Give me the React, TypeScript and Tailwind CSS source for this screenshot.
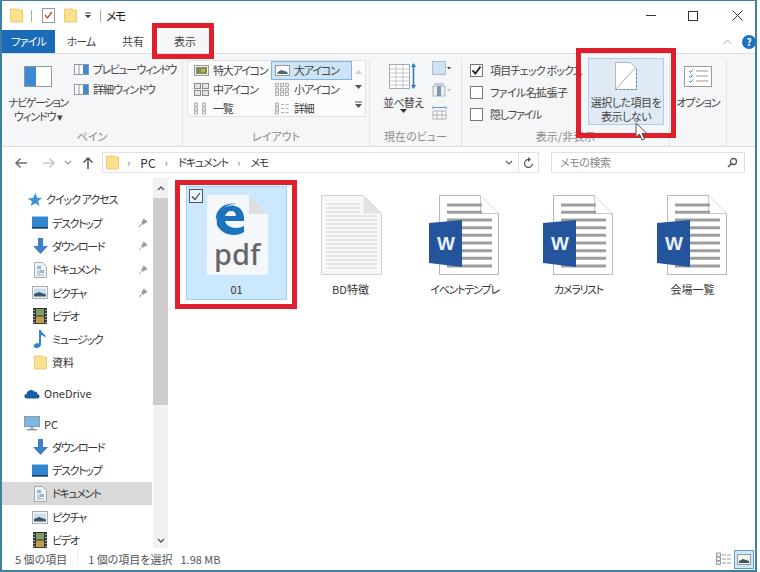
import { ReactNode } from 'react';

const Folder = ({ className = '' }: { className?: string }) => (
  <svg width="13" height="15" viewBox="0 0 13 15" className={className}>
    <path d="M.5 1h8l1 1h3v12H.5z" fill="#fbe08e" stroke="#e5c365" strokeWidth="0.8" />
  </svg>
);

const Pin = () => (
  <svg width="10" height="10" viewBox="0 0 10 10" className="ml-auto mr-[4px]">
    <path d="M3 4.400l1.900-1.900-.1-.9L6 .5l3.500 3.500-1.100.9-.9-.1L5.600 6.700z" fill="#9a9a9a" />
    <path d="M1 9l3-3.200" stroke="#9a9a9a" />
  </svg>
);

const Desktop = () => (
  <svg width="16" height="13" viewBox="0 0 16 13">
    <rect x="0" y="0.500" width="16" height="12" fill="#2f86cf" />
    <rect x="0" y="11" width="16" height="1.500" fill="#1c3f63" />
  </svg>
);

const Down = () => (
  <svg width="15" height="16" viewBox="0 0 15 16">
    <path d="M5 0h5v8h5l-7.500 8L0 8h5z" fill="#3d7fc4" />
  </svg>
);

const Doc = () => (
  <svg width="13" height="16" viewBox="0 0 13 16">
    <path d="M.5.500h8l4 4v11H.5z" fill="#f3f6f8" stroke="#a3a9ae" />
    <rect x="3" y="4" width="4" height="3" fill="#8fb4d6" />
    <rect x="6" y="8" width="4" height="3" fill="#8fb4d6" />
    <path d="M3 9h3M3 11h3M3 13h7" stroke="#8a96a0" strokeWidth="0.800" />
  </svg>
);

const Pic = () => (
  <svg width="16" height="13" viewBox="0 0 16 13">
    <rect x="0.500" y="0.500" width="15" height="12" fill="#f4f6f7" stroke="#a8adb1" />
    <rect x="2" y="2.500" width="12" height="8" fill="#c9ddec" />
    <path d="M2 8l5-2 7 2.500v2H2z" fill="#38586e" />
  </svg>
);

const Video = () => (
  <svg width="14" height="16" viewBox="0 0 14 16">
    <rect width="14" height="16" fill="#31373b" />
    <rect x="3" y="1" width="8" height="6.500" fill="#7f9c5a" />
    <rect x="3" y="8.500" width="8" height="6.500" fill="#c79a4a" />
    <path d="M1 2v1M1 5v1M1 8v1M1 11v1M1 14v1M13 2v1M13 5v1M13 8v1M13 11v1M13 14v1" stroke="#fff" strokeWidth="1.200" />
  </svg>
);

const Music = () => (
  <svg width="14" height="18" viewBox="0 0 14 18">
    <path d="M6 0h2c0 3 5 4 5 8-1-1.500-3-2.500-5-3v9.500c0 2-2 3.500-4.500 3.500S0 16.500 1 15c.8-1.300 3-2 5-1.500z" fill="#2f86cf" />
  </svg>
);

const SideRow = ({ icon, label, pin, active, wide }: { icon: ReactNode; label: string; pin?: boolean; active?: boolean; wide?: boolean }) => (
  <div className={`flex h-[23.3px] shrink-0 items-center pl-[30px] ${active ? 'bg-[#d9d9d9]' : ''}`}>
    <span className="flex w-[16px] shrink-0 justify-center">{icon}</span>
    <span className={`ml-[4px] text-[#333] ${wide ? '' : 'tracking-[-1.3px]'}`}>{label}</span>
    {pin && <Pin />}
  </div>
);

const SideHead = ({ icon, label, className = '', textClass = '' }: { icon: ReactNode; label: string; className?: string; textClass?: string }) => (
  <div className={`flex h-[23.3px] shrink-0 items-center ${className}`}>
    <span className="flex w-[16px] shrink-0 justify-center">{icon}</span>
    <span className={`ml-[4px] text-[#333] ${textClass}`}>{label}</span>
  </div>
);

const GalleryIcon = ({ kind }: { kind: number }) => (
  <svg width="15" height="13" viewBox="0 0 15 13" className="shrink-0">
    {kind === 0 && (
      <>
        <rect x="0.500" y="1.500" width="14" height="10" fill="#f3f3f3" stroke="#999" />
        <rect x="2" y="3" width="11" height="7" fill="#7e8d62" />
        <rect x="7" y="5" width="4" height="3" fill="#d6a93e" />
      </>
    )}
    {kind === 1 && (
      <>
        <rect x="0.500" y="1.500" width="14" height="10" fill="#fff" stroke="#999" />
        <path d="M2.500 8l4-2 6 2v2h-10z" fill="#51677a" />
      </>
    )}
    {kind === 2 && (
      <>
        <rect x="0.500" y="0.500" width="6" height="5" fill="#dfe7ee" stroke="#888" />
        <rect x="8.500" y="0.500" width="6" height="5" fill="#dfe7ee" stroke="#888" />
        <rect x="0.500" y="7.500" width="6" height="5" fill="#dfe7ee" stroke="#888" />
        <rect x="8.500" y="7.500" width="6" height="5" fill="#dfe7ee" stroke="#888" />
      </>
    )}
    {kind === 3 && (
      <path d="M.5.500h3v3h-3zM5.500.500h3v3h-3zM10.500.500h3v3h-3zM.5 5h3v3h-3zM5.500 5h3v3h-3zM10.500 5h3v3h-3zM.5 9.500h3v3h-3zM5.500 9.500h3v3h-3zM10.500 9.500h3v3h-3z" fill="#f2f2f2" stroke="#999" strokeWidth="0.800" />
    )}
    {kind === 4 && (
      <path d="M.5 1h3v3h-3zM.5 5h3v3h-3zM.5 9h3v3h-3zM8.500 1h3v3h-3zM8.500 5h3v3h-3zM8.500 9h3v3h-3z" fill="#f4f4f4" stroke="#999" strokeWidth="0.800" />
    )}
    {kind === 5 && (
      <path d="M.5 1h3v3h-3zM.5 5h3v3h-3zM.5 9h3v3h-3zM6 2.500h3M10.500 2.500h3M6 6.500h3M10.500 6.500h3M6 10.500h3M10.500 10.500h3" fill="#f4f4f4" stroke="#999" strokeWidth="0.800" />
    )}
  </svg>
);

const GalleryItem = ({ kind, label, active }: { kind: number; label: string; active?: boolean }) => (
  <div className={`flex h-[19px] w-[81px] items-center gap-[4px] pl-[3px] border ${active ? 'border-[#7eb4ea] bg-[#cde3f6]' : 'border-transparent'}`}>
    <GalleryIcon kind={kind} />
    <span className="whitespace-nowrap tracking-[-1.2px] text-[#444]">{label}</span>
  </div>
);

const Check = ({ label, checked, textClass }: { label: string; checked?: boolean; textClass: string }) => (
  <div className="flex h-[22px] items-center gap-[7px]">
    <span className="flex h-[13px] w-[13px] items-center justify-center border border-[#777] bg-white">
      {checked && (
        <svg width="11" height="11" viewBox="0 0 11 11">
          <path d="M1.500 5.500l3 3 5-7" fill="none" stroke="#222" strokeWidth="1.800" />
        </svg>
      )}
    </span>
    <span className={`whitespace-nowrap text-[#444] ${textClass}`}>{label}</span>
  </div>
);

const Group = ({ width, label, children }: { width: string; label: string; children: ReactNode }) => (
  <div className={`flex shrink-0 flex-col border-r border-[#e2e3e4] ${width}`}>
    <div className="flex h-[69px]">{children}</div>
    <div className="text-center leading-[14px] text-[#8b8b8b]">{label}</div>
  </div>
);

const WordFile = ({ label, textClass = '' }: { label: string; textClass?: string }) => (
  <div className="flex h-[114px] w-[101px] shrink-0 flex-col items-center border border-transparent pt-[7px]">
    <svg width="72" height="82" viewBox="0 0 72 82">
      <path d="M10.500 1.500h41l18 18v61h-59z" fill="#fff" stroke="#b8b8b8" />
      <path d="M51.500 1.500v18h18" fill="#fff" stroke="#c8c8c8" />
      <path d="M18 11h35M18 18.300h35M18 26h45M18 33.700h45M18 41.300h45M18 49h45M18 56.700h45M18 64.300h45M18 72h45" stroke="#9e9e9e" strokeWidth="3" />
      <path d="M0 29l33-3v47L0 69z" fill="#24559c" />
      <text x="17" y="56" textAnchor="middle" fontSize="19" fontWeight="700" fontFamily="'Liberation Sans', sans-serif" fill="#eaf1fa">W</text>
    </svg>
    <span className={`mt-[5px] leading-[16px] text-[#333] ${textClass}`}>{label}</span>
  </div>
);

export default function App() {
  return (
    <div className="relative h-[572px] w-[760px] overflow-hidden bg-white text-[11px] font-['Noto_Sans_CJK_JP','Noto_Sans',sans-serif] [font-feature-settings:'palt']">
      <div className="flex h-[572px] w-[757px] flex-col border-x-2 border-t border-b-2 border-[#3f80a0] bg-white">
        {/* title bar */}
        <div className="flex h-[29px] shrink-0 items-center pl-[8px]">
          <Folder />
          <span className="ml-[8px] h-[12px] w-px bg-[#aaa]" />
          <svg width="13" height="15" viewBox="0 0 13 15" className="ml-[10px]">
            <rect x="0.500" y="0.500" width="12" height="14" fill="#fff" stroke="#999" />
            <path d="M3 7l2.500 3L10 4" fill="none" stroke="#c8452c" strokeWidth="1.300" />
          </svg>
          <Folder className="ml-[9px]" />
          <svg width="8" height="8" viewBox="0 0 8 8" className="ml-[7px]">
            <path d="M1 1h6" stroke="#444" />
            <path d="M1 3l3 3 3-3z" fill="#333" />
          </svg>
          <span className="ml-[8px] h-[12px] w-px bg-[#aaa]" />
          <span className="ml-[5px] text-[12px] tracking-[-1.5px] text-[#222]">メモ</span>
          <div className="ml-auto flex items-center">
            <span className="h-[1px] w-[10px] bg-[#333]" />
            <span className="ml-[32px] h-[10px] w-[10px] border border-[#333]" />
            <svg width="11" height="11" viewBox="0 0 11 11" className="ml-[34px] mr-[12px]">
              <path d="M.5.500l10 10M10.500.500l-10 10" stroke="#333" />
            </svg>
          </div>
        </div>

        {/* tabs */}
        <div className="flex h-[23px] shrink-0 items-stretch">
          <div className="flex w-[53px] items-center justify-center bg-[#1b6cb8] tracking-[-0.8px] text-white">ファイル</div>
          <div className="flex w-[52px] items-center justify-center tracking-[-1px] text-[#444]">ホーム</div>
          <div className="flex w-[52px] items-center justify-center text-[#444]">共有</div>
          <div className="ml-[1px] flex w-[50px] items-center justify-center bg-[#f5f6f7] text-[#444]">表示</div>
          <div className="ml-auto flex items-center">
            <svg width="9" height="6" viewBox="0 0 9 6">
              <path d="M.5 5l4-4 4 4" fill="none" stroke="#aaa" />
            </svg>
            <span className="ml-[10px] -mr-[1px] flex h-[14px] w-[14px] items-center justify-center rounded-full bg-[#1b72c0] text-[10px] font-bold leading-none text-white">?</span>
          </div>
        </div>

        {/* ribbon */}
        <div className="flex h-[94px] shrink-0 border-y border-[#dcdddf] bg-[#f5f6f7] pt-[6px]">
          <Group width="w-[181px]" label="ペイン">
            <div className="flex w-[72px] flex-col items-center pt-[6px] leading-[14px] text-[#444]">
              <svg width="28" height="21" viewBox="0 0 28 21" className="shrink-0">
                <rect x="0.500" y="0.500" width="27" height="20" fill="#fff" stroke="#8c98a3" />
                <rect x="1" y="1" width="11" height="19" fill="#3c8ad2" />
              </svg>
              <span className="mt-[8px] whitespace-nowrap tracking-[-1.5px]">ナビゲーション</span>
              <span className="whitespace-nowrap tracking-[-1px]">ウィンドウ ▾</span>
            </div>
            <div className="flex flex-col -mt-[1px] text-[#444]">
              <div className="flex h-[20px] items-center gap-[4px]">
                <svg width="15" height="11" viewBox="0 0 15 11">
                  <rect x="0.500" y="0.500" width="14" height="10" fill="#fff" stroke="#8c98a3" />
                  <rect x="9" y="1" width="5" height="9" fill="#3c8ad2" />
                  <path d="M5 1v9" stroke="#8c98a3" />
                </svg>
                <span className="whitespace-nowrap tracking-[-1.5px]">プレビュー ウィンドウ</span>
              </div>
              <div className="flex h-[20px] items-center gap-[4px]">
                <svg width="15" height="11" viewBox="0 0 15 11">
                  <rect x="0.500" y="0.500" width="14" height="10" fill="#fff" stroke="#8c98a3" />
                  <rect x="9" y="1" width="5" height="9" fill="#3c8ad2" />
                  <path d="M5 1v9" stroke="#8c98a3" />
                </svg>
                <span className="whitespace-nowrap tracking-[-1px]">詳細ウィンドウ</span>
              </div>
            </div>
          </Group>

          <Group width="w-[187px]" label="レイアウト">
            <div className="ml-[4px] flex h-[57px] w-[179px] border border-[#e1e2e3] bg-[#fbfbfb] pl-[2px]">
              <div className="grid w-[162px] grid-cols-2">
                <GalleryItem kind={0} label="特大アイコン" />
                <GalleryItem kind={1} label="大アイコン" active />
                <GalleryItem kind={2} label="中アイコン" />
                <GalleryItem kind={3} label="小アイコン" />
                <GalleryItem kind={4} label="一覧" />
                <GalleryItem kind={5} label="詳細" />
              </div>
              <div className="flex flex-1 flex-col items-center justify-around py-[3px] text-[#666]">
                <svg width="7" height="5" viewBox="0 0 7 5"><path d="M0 5l3.500-4L7 5z" fill="#ccc" /></svg>
                <svg width="7" height="5" viewBox="0 0 7 5"><path d="M0 0l3.500 4L7 0z" fill="#555" /></svg>
                <svg width="7" height="7" viewBox="0 0 7 7"><path d="M0 1h7" stroke="#555" /><path d="M0 3l3.500 4L7 3z" fill="#555" /></svg>
              </div>
            </div>
          </Group>

          <Group width="w-[92px]" label="現在のビュー">
            <div className="flex flex-col items-center pl-[13px] pt-[2px] leading-[14px] text-[#444]">
              <svg width="28" height="28" viewBox="0 0 28 28" className="shrink-0">
                <rect x="0.500" y="2.500" width="20" height="24" fill="#fff" stroke="#a3abb2" />
                <path d="M1 7h19M1 11h19M1 15h19M1 19h19M1 23h19M7 3v23M14 3v23" stroke="#c1c7cc" />
                <path d="M24.500 2v24" stroke="#2f7fc4" strokeWidth="1.600" />
                <path d="M22 5l2.500-4L27 5zM22 23l2.500 4 2.500-4z" fill="#2f7fc4" />
              </svg>
              <span className="mt-[5px] whitespace-nowrap tracking-[-0.7px]">並べ替え</span>
              <svg width="7" height="4" viewBox="0 0 7 4" className="shrink-0"><path d="M0 0l3.500 4L7 0z" fill="#333" /></svg>
            </div>
            <div className="ml-[9px] flex flex-col gap-[8px] pt-[1px]">
              <svg width="20" height="14" viewBox="0 0 20 14" className="shrink-0">
                <rect x="0.500" y="0.500" width="13" height="13" fill="#cfe1f2" stroke="#8da8c0" strokeDasharray="2 1" />
                <path d="M15 6l2 2.500L19 6z" fill="#444" />
              </svg>
              <svg width="20" height="14" viewBox="0 0 20 14" className="shrink-0">
                <path d="M1 3h12v10H1z" fill="#eef1f3" stroke="#a8b0b6" />
                <rect x="5" y="3" width="4" height="10" fill="#7e99ad" />
                <path d="M2 1h10" stroke="#7ca7cc" />
                <path d="M15 6l2 2.500L19 6z" fill="#bbb" />
              </svg>
              <svg width="20" height="15" viewBox="0 0 20 15" className="shrink-0">
                <path d="M1 6h13v8H1zM5 6v8M10 6v8M1 10h13" fill="#fff" stroke="#a8b0b6" />
                <path d="M1 1v3M14 1v3M2 2.500h11" stroke="#5f94c1" />
              </svg>
            </div>
          </Group>

          <Group width="w-[208px]" label="表示/非表示">
            <div className="flex flex-col -mt-[1px] pl-[8px]">
              <Check label="項目チェック ボックス" checked textClass="tracking-[-0.8px]" />
              <Check label="ファイル名拡張子" textClass="tracking-[-0.6px]" />
              <Check label="隠しファイル" textClass="tracking-[-1.2px]" />
            </div>
            <div className="ml-auto mr-[5px] -mt-[2px] flex h-[67px] w-[76px] shrink-0 flex-col items-center border border-[#a9cdea] bg-[#dfeaf5] pt-[3px] leading-[14px] text-[#444]">
              <svg width="22" height="28" viewBox="0 0 22 28" className="shrink-0">
                <path d="M.5.500h15l6 6v21H.5z" fill="#fff" stroke="#b7b7b7" />
                <path d="M21.500 7v20.500H.5" fill="none" stroke="#4d8fc9" strokeDasharray="2 2" />
                <path d="M1 27L20 6" stroke="#a9a9a9" />
              </svg>
              <span className="mt-[5px] whitespace-nowrap tracking-[-0.5px]">選択した項目を</span>
              <span className="whitespace-nowrap tracking-[-0.5px]">表示しない</span>
            </div>
          </Group>

          <Group width="w-[57px]" label="">
            <div className="flex w-full flex-col items-center pt-[6px] leading-[14px] text-[#444]">
              <svg width="28" height="21" viewBox="0 0 28 21" className="shrink-0">
                <rect x="0.500" y="0.500" width="27" height="20" fill="#fff" stroke="#9a9a9a" />
                <path d="M5 5l1.500 1.500L9 3.500M5 10l1.500 1.500L9 8.500M5 15l1.500 1.500L9 13.500" fill="none" stroke="#2f7fc4" />
                <path d="M12 5h12M12 10h12M12 15h12" stroke="#9a9a9a" />
              </svg>
              <span className="mt-[8px] whitespace-nowrap tracking-[-1px]">オプション</span>
            </div>
          </Group>
        </div>

        {/* address bar */}
        <div className="flex h-[31px] shrink-0 items-center">
          <svg width="14" height="12" viewBox="0 0 14 12" className="ml-[12px]">
            <path d="M13 6H2M6.500 1.500L2 6l4.500 4.500" fill="none" stroke="#6e6e6e" strokeWidth="1.500" />
          </svg>
          <svg width="14" height="12" viewBox="0 0 14 12" className="ml-[14px]">
            <path d="M1 6h11M7.500 1.500L12 6l-4.500 4.500" fill="none" stroke="#c8c8c8" strokeWidth="1.500" />
          </svg>
          <svg width="8" height="6" viewBox="0 0 8 6" className="ml-[8px]">
            <path d="M1 1l3 3 3-3" fill="none" stroke="#999" strokeWidth="1.200" />
          </svg>
          <svg width="12" height="14" viewBox="0 0 12 14" className="ml-[10px]">
            <path d="M6 13V2M1.500 6.500L6 2l4.500 4.500" fill="none" stroke="#555" strokeWidth="1.500" />
          </svg>
          <div className="ml-[8px] flex h-[21px] w-[437px] items-center border border-[#e0e1e2] pl-[3px] text-[#333]">
            <Folder />
            <span className="ml-[8px] text-[#777]">›</span>
            <span className="ml-[10px] text-[12px]">PC</span>
            <span className="ml-[9px] text-[#777]">›</span>
            <span className="ml-[10px] tracking-[-1px]">ドキュメント</span>
            <span className="ml-[9px] text-[#777]">›</span>
            <span className="ml-[10px] tracking-[-1.5px]">メモ</span>
            <div className="ml-auto flex h-full items-center">
              <svg width="8" height="6" viewBox="0 0 8 6">
                <path d="M1 1l3 3 3-3" fill="none" stroke="#666" strokeWidth="1.200" />
              </svg>
              <span className="ml-[5px] h-full w-px bg-[#e0e1e2]" />
              <svg width="11" height="12" viewBox="0 0 11 12" className="mx-[4px]">
                <path d="M9.500 6.500A4 4 0 1 1 6 2.500" fill="none" stroke="#555" strokeWidth="1.200" />
                <path d="M5 0l3 2.500L5 5z" fill="#555" />
              </svg>
            </div>
          </div>
          <div className="ml-[12px] flex h-[21px] w-[194px] items-center border border-[#e0e1e2] pl-[8px] pr-[6px] tracking-[-0.4px] text-[#888]">
            <span>メモの検索</span>
            <svg width="11" height="11" viewBox="0 0 11 11" className="ml-auto">
              <circle cx="6.500" cy="4.500" r="3" fill="none" stroke="#555" strokeWidth="1.300" />
              <path d="M4.500 6.500L1 10" stroke="#555" strokeWidth="1.600" />
            </svg>
          </div>
        </div>

        {/* main */}
        <div className="flex h-[370px] shrink-0 overflow-hidden">
          <div className="flex h-full w-[150px] shrink-0 flex-col overflow-hidden pt-[10px]">
            <SideHead
              label="クイック アクセス"
              className="pl-[24px]"
              textClass="tracking-[-1px]"
              icon={
                <svg width="15" height="14" viewBox="0 0 15 14">
                  <path d="M8.500 0l1.700 4.800 4.800.2-3.800 3 1.300 5-4-2.800L3.600 13l1.400-4.700L.5 5.500l5.500-.4z" fill="#3d92d8" />
                </svg>
              }
            />
            <SideRow icon={<Desktop />} label="デスクトップ" pin />
            <SideRow icon={<Down />} label="ダウンロード" pin />
            <SideRow icon={<Doc />} label="ドキュメント" pin />
            <SideRow icon={<Pic />} label="ピクチャ" pin />
            <SideRow icon={<Video />} label="ビデオ" />
            <SideRow icon={<Music />} label="ミュージック" />
            <SideRow icon={<Folder />} label="資料" wide />
            <SideHead
              label="OneDrive"
              className="mt-[7.500px] pl-[22px]"
              icon={
                <svg width="16" height="11" viewBox="0 0 16 11">
                  <path d="M3 10.500C-.5 10.500-.5 6 2.500 6 3 2.500 8 .5 10 3.500c3-.5 3.500 2 3.500 2.500 2.500.5 3 4.500 0 4.500z" fill="#1d5da8" />
                </svg>
              }
            />
            <SideHead
              label="PC"
              className="mt-[7px] pl-[22px]"
              icon={
                <svg width="16" height="15" viewBox="0 0 16 15">
                  <rect x="0.500" y="0.500" width="15" height="10" fill="#7ab6e6" stroke="#8e9ba6" />
                  <rect x="6" y="11" width="4" height="2" fill="#aab2b8" />
                  <rect x="3" y="13" width="10" height="1.500" fill="#8e9ba6" />
                </svg>
              }
            />
            <SideRow icon={<Down />} label="ダウンロード" />
            <SideRow icon={<Desktop />} label="デスクトップ" />
            <SideRow icon={<Doc />} label="ドキュメント" active />
            <SideRow icon={<Pic />} label="ピクチャ" />
            <SideRow icon={<Video />} label="ビデオ" />
          </div>

          {/* scrollbar */}
          <div className="ml-[1px] flex w-[15px] shrink-0 flex-col items-center bg-[#f1f1f1]">
            <div className="flex h-[20px] shrink-0 items-center justify-center">
              <svg width="8" height="5" viewBox="0 0 8 5"><path d="M1 4l3-3 3 3" fill="none" stroke="#555" strokeWidth="1.300" /></svg>
            </div>
            <div className="h-[207px] w-full shrink-0 bg-[#cdcdcd]" />
            <div className="mt-auto flex h-[16px] shrink-0 items-center justify-center">
              <svg width="8" height="5" viewBox="0 0 8 5"><path d="M1 1l3 3 3-3" fill="none" stroke="#555" strokeWidth="1.300" /></svg>
            </div>
          </div>

          {/* file grid */}
          <div className="flex flex-1 gap-[13px] pl-[18px] pt-[8px]">
            <div className="relative flex h-[114px] w-[101px] shrink-0 flex-col items-center border border-[#99d1ff] bg-[#cce8ff] pt-[7px]">
              <span className="absolute left-[2px] top-[2px] flex h-[14px] w-[14px] items-center justify-center border border-[#555] bg-[#eaf5fd]">
                <svg width="10" height="9" viewBox="0 0 10 9"><path d="M1 4.500l3 3 5-6.500" fill="none" stroke="#444" strokeWidth="1.200" /></svg>
              </span>
              <svg width="72" height="82" viewBox="0 0 72 82">
                <path d="M6 1h42l19 19v61H6z" fill="#f5f8fb" />
                <path d="M48 1v19h19z" fill="#dcdfe2" />
                <path
                  fillRule="evenodd"
                  d="M43 27H24c1 4 5 7 11 7 3 0 6-.8 8-2v6c-3 2-6 3-10 3-8 0-14-4-17-10-1-6 1-13 7-17 3-2 8-3 11-2 6 1 10 8 9 15zM24 22h11c0-3-2-5-5-5-3 0-5 2-6 5z"
                  fill="#1b72bd"
                />
                <path d="M15 26c-1-8 5-15 13-16 5-1 7 0 7 0-9-1-15 6-20 16z" fill="#1b72bd" />
                <text x="13" y="71" fontSize="29" fontWeight="500" fontFamily="'Noto Sans', sans-serif" fill="#666">pdf</text>
              </svg>
              <span className="mt-[5px] leading-[16px] text-[#333]">01</span>
            </div>

            <div className="flex h-[114px] w-[101px] shrink-0 flex-col items-center border border-transparent pt-[7px]">
              <svg width="72" height="82" viewBox="0 0 72 82">
                <path d="M6.500 1.500h42l18 18v61h-60z" fill="#f8f8f8" stroke="#d0d0d0" />
                <path d="M48.500 1.500v18h18z" fill="#e3e3e3" />
                <path d="M11 10h34M11 14h34M11 18h34M11 22h51M11 26h51M11 30h51M11 34h51M11 38h51M11 42h51M11 46h51M11 50h51M11 54h51M11 58h51M11 62h51M11 66h51M11 70h51M11 74h51" stroke="#d4d4d4" />
              </svg>
              <span className="mt-[5px] leading-[16px] text-[#333]">BD特徴</span>
            </div>

            <WordFile label="イベントテンプレ" textClass="tracking-[-1.2px]" />
            <WordFile label="カメラリスト" textClass="tracking-[-1.3px]" />
            <WordFile label="会場一覧" />
          </div>
        </div>

        {/* status bar */}
        <div className="flex h-[22px] shrink-0 items-center pl-[13px] text-[#555]">
          <span>5 個の項目</span>
          <span className="ml-[10px] h-[12px] w-px bg-[#eee]" />
          <span className="ml-[10px]">1 個の項目を選択</span>
          <span className="ml-[8px]">1.98 MB</span>
          <div className="ml-auto flex items-center">
            <svg width="16" height="14" viewBox="0 0 16 14">
              <path d="M.5 1h4v3.500h-4zM.5 5h4v3.500h-4zM.5 9h4v3.500h-4zM6 3h4M11 3h4M6 7h4M11 7h4M6 11h4M11 11h4" fill="#eee" stroke="#999" />
            </svg>
            <span className="ml-[2px] mr-[1px] flex h-[19px] w-[20px] items-center justify-center border border-[#5ea3cc] bg-[#cfe6f6]">
              <svg width="14" height="11" viewBox="0 0 14 11">
                <rect x="0.500" y="0.500" width="13" height="10" fill="#f2f2f2" stroke="#999" />
                <path d="M2 7l4-2 6 2v2H2z" fill="#3f5a4f" />
              </svg>
            </span>
          </div>
        </div>
      </div>

      {/* annotation overlays */}
      <div className="absolute left-[152px] top-[23px] h-[36px] w-[62px] border-[5px] border-[#e01f2d]" />
      <div className="absolute left-[576px] top-[48px] h-[90px] w-[100px] border-[5px] border-[#e01f2d]" />
      <div className="absolute left-[175px] top-[180px] h-[129px] w-[122px] border-[5px] border-[#e01f2d]" />
      <svg width="14" height="19" viewBox="0 0 14 19" className="absolute left-[635px] top-[122px]">
        <path d="M1 1v14l3.500-3 2.500 6 2.500-1-2.500-5.500H12z" fill="#fff" stroke="#555" />
      </svg>
    </div>
  );
}
